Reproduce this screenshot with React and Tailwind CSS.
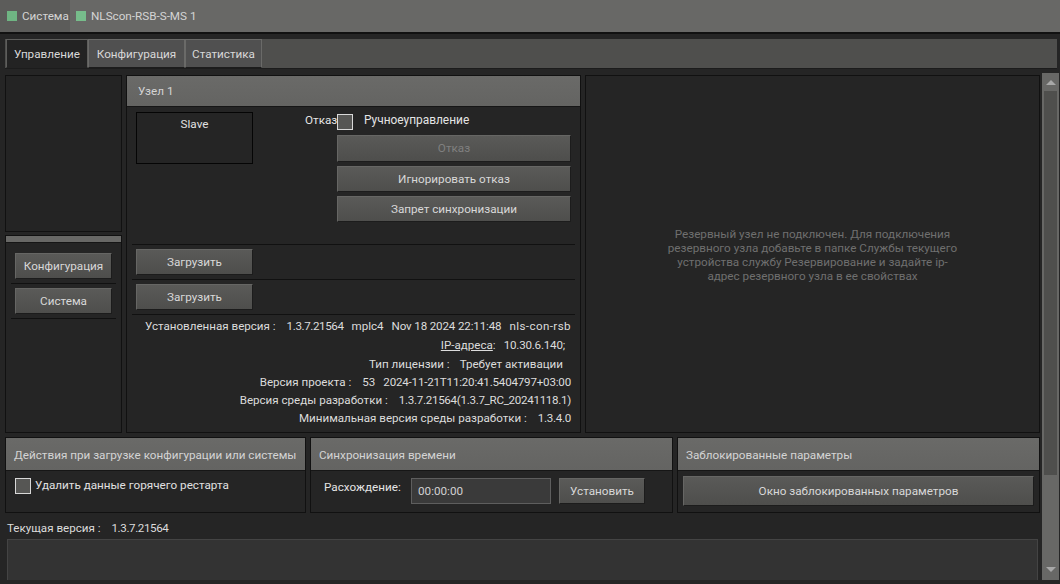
import React from "react";

const btnBase = "flex items-center justify-center border border-[#1c1c1c] border-t-[#666664] border-l-[#666664] bg-gradient-to-b from-[#5a5a58] to-[#4e4e4c]";
const btn = btnBase + " text-[#d8d8d8]";
const head = "flex items-center bg-gradient-to-b from-[#6a6a68] to-[#646462] border-b border-[#161616] text-[#d4d4d4]";

function Check() {
  return <span className="block w-4 h-4 shrink-0 bg-[#565654] border border-[#d8d8d8]" />;
}

function InfoRow({ className, children }) {
  return <div className={"flex justify-end items-center whitespace-pre " + className}>{children}</div>;
}

function App() {
  return (
    <div className="w-[1060px] h-[584px] overflow-hidden flex flex-col bg-[#252525] text-[11.7px] leading-4 text-[#e0e0e0] font-['Roboto','Noto_Sans',sans-serif]">
      <div className="h-[32px] shrink-0 flex bg-[#686866] text-[#d4d4d4]">
        <div className="w-[70px] flex items-center pl-[7px] gap-[5px] bg-[#5c5c5a]">
          <span className="w-[10px] h-[10px] bg-[#6fb583]" />
          <span>Система</span>
        </div>
        <div className="flex items-center pl-[6px] gap-[5px]">
          <span className="w-[10px] h-[10px] bg-[#77bd8b]" />
          <span>NLScon-RSB-S-MS 1</span>
        </div>
      </div>
      <div className="h-[2px] shrink-0 bg-[#111111]" />

      <div className="flex-1 flex min-h-0 pr-[1px]">
        <div className="w-[1041px] shrink-0 flex flex-col pl-[5px] pt-[5px]">
          <div className="h-[30px] flex shrink-0 w-[1052px] pl-[1px] bg-[#4f4f4d] border-b border-[#1c1c1c] text-[#d8d8d8]">
            <div className="w-[82px] flex items-center justify-center bg-[#232323] border border-[#5e5e5c] border-b-[#232323]">Управление</div>
            <div className="w-[97px] flex items-center justify-center bg-[#505050] border border-[#6a6a68] border-b-[#1c1c1c]">Конфигурация</div>
            <div className="w-[77px] flex items-center justify-center bg-[#505050] border border-[#6a6a68] border-b-[#1c1c1c]">Статистика</div>
          </div>

          <div className="flex gap-[4px] mt-[6px] h-[358px] shrink-0">
            <div className="w-[117px] shrink-0 flex flex-col gap-[3px]">
              <div className="h-[157px] border border-[#111111] bg-[#242424]" />
              <div className="flex-1 border border-[#111111] flex flex-col">
                <div className="h-[7px] bg-[#686866] border-b border-[#161616]" />
                <div className="px-[5px] pt-[10px]">
                  <div className="pb-[4px] border-b border-[#111111] px-[4px]">
                    <div className={btn + " h-[26px]"}>Конфигурация</div>
                  </div>
                  <div className="pt-[4px] pb-[4px] border-b border-[#111111] px-[4px]">
                    <div className={btn + " h-[26px]"}>Система</div>
                  </div>
                </div>
              </div>
            </div>

            <div className="w-[455px] shrink-0 border border-[#111111] flex flex-col">
              <div className={head + " h-[31px] pl-[11px] shrink-0"}>Узел 1</div>
              <div className="flex h-[137px] shrink-0 pl-[9px] pt-[5px]">
                <div className="w-[117px] h-[52px] border border-[#050505] text-center pt-[3px]">Slave</div>
                <div className="ml-[52px] flex flex-col">
                  <div className="flex h-[24px] items-start">
                    <span className="w-[32px] leading-[16px] text-[#e4e4e4]">Отказ</span>
                    <span className="mt-[2px]"><Check /></span>
                    <span className="ml-[11px] leading-[16px] text-[11.9px] text-[#e4e4e4]">Ручноеуправление</span>
                  </div>
                  <div className="ml-[32px] w-[234px] flex flex-col gap-[4px] -mt-[1px]">
                    <div className={btnBase + " h-[27px] pb-[2px] text-[#808080]"}>Отказ</div>
                    <div className={btn + " h-[26px]"}>Игнорировать отказ</div>
                    <div className={btn + " h-[26px]"}>Запрет синхронизации</div>
                  </div>
                </div>
              </div>
              <div className="px-[5px] shrink-0">
                <div className="border-t border-[#111111] pt-[4px] pb-[4px] pl-[4px]">
                  <div className={btn + " w-[117px] h-[26px]"}>Загрузить</div>
                </div>
                <div className="border-t border-[#111111] pt-[4px] pb-[4px] pl-[4px]">
                  <div className={btn + " w-[117px] h-[26px]"}>Загрузить</div>
                </div>
                <div className="border-t border-[#111111]" />
              </div>
              <div className="pr-[9px] pt-[1px] text-[#dcdcdc] text-[11.6px]">
                <InfoRow className="h-[19px] gap-[8px]">
                  <span className="mr-[3px]">Установленная версия :</span>
                  <span className="tracking-[-0.4px]">1.3.7.21564</span>
                  <span>mplc4</span>
                  <span className="tracking-[-0.15px]">Nov 18 2024 22:11:48</span>
                  <span className="tracking-[0.4px]">nls-con-rsb</span>
                </InfoRow>
                <InfoRow className="h-[19px] pr-[6px]">
                  <span className="underline">IP-адреса</span>
                  <span className="mr-[8px]">:</span>
                  <span className="tracking-[-0.2px]">10.30.6.140;</span>
                </InfoRow>
                <InfoRow className="h-[19px] pr-[8px] gap-[10px]">
                  <span>Тип лицензии :</span>
                  <span>Требует активации</span>
                </InfoRow>
                <InfoRow className="h-[18px] gap-[8px]">
                  <span className="mr-[3px]">Версия проекта :</span>
                  <span>53</span>
                  <span className="tracking-[-0.2px]">2024-11-21T11:20:41.5404797+03:00</span>
                </InfoRow>
                <InfoRow className="h-[18px] gap-[11px]">
                  <span>Версия среды разработки :</span>
                  <span className="tracking-[-0.3px]">1.3.7.21564(1.3.7_RC_20241118.1)</span>
                </InfoRow>
                <InfoRow className="h-[18px] gap-[11px]">
                  <span>Минимальная версия среды разработки :</span>
                  <span className="tracking-[-0.3px]">1.3.4.0</span>
                </InfoRow>
              </div>
            </div>

            <div className="w-[455px] shrink-0 border border-[#111111] flex items-center justify-center">
              <p className="w-[296px] text-center text-[#6f6f6f] leading-[14px] mt-[1px]">
                Резервный узел не подключен. Для подключения резервного узла добавьте в папке Службы текущего устройства службу Резервирование и задайте ip-адрес резервного узла в ее свойствах
              </p>
            </div>
          </div>

          <div className="flex gap-[4px] mt-[4px] h-[76px] shrink-0">
            <div className="w-[301px] shrink-0 border border-[#111111] flex flex-col">
              <div className={head + " h-[33px] pl-[8px] pt-[1px] shrink-0 whitespace-nowrap"}>Действия при загрузке конфигурации или системы</div>
              <div className="flex items-start pl-[9px] pt-[7px] gap-[4px]">
                <Check />
                <span className="leading-[14px] text-[#e0e0e0]">Удалить данные горячего рестарта</span>
              </div>
            </div>
            <div className="w-[363px] shrink-0 border border-[#111111] flex flex-col">
              <div className={head + " h-[33px] pl-[8px] pt-[1px] shrink-0"}>Синхронизация времени</div>
              <div className="flex items-start pl-[13px] pt-[7px]">
                <span className="w-[87px] text-[#e4e4e4] leading-[14px] pt-[2px]">Расхождение:</span>
                <div className="w-[140px] h-[26px] flex items-center pl-[6px] bg-[#3a3a3a] border border-[#5e5e5e] text-[#d0d0d0]">00:00:00</div>
                <div className={btn + " w-[86px] h-[26px] ml-[8px]"}>Установить</div>
              </div>
            </div>
            <div className="w-[363px] shrink-0 border border-[#111111] flex flex-col">
              <div className={head + " h-[33px] pl-[8px] pt-[1px] shrink-0"}>Заблокированные параметры</div>
              <div className="px-[5px] pt-[5px]">
                <div className={btn + " h-[30px]"}>Окно заблокированных параметров</div>
              </div>
            </div>
          </div>

          <div className="flex items-center gap-[11px] h-[16px] mt-[7px] pl-[2px] whitespace-pre text-[#dcdcdc] text-[11.6px] shrink-0">
            <span>Текущая версия :</span>
            <span className="tracking-[-0.4px]">1.3.7.21564</span>
          </div>
          <div className="h-[41px] mt-[3px] ml-[2px] w-[1031px] bg-[#333333] border border-[#444444] border-b-0 shrink-0" />
        </div>

        <div className="ml-[1px] mt-[39px] h-[507px] w-[17px] shrink-0 bg-[#686866] flex flex-col items-center">
          <span className="mt-[7px] w-0 h-0 border-x-[5px] border-x-transparent border-b-[5px] border-b-[#a8a8a8]" />
          <div className="mt-[6px] w-[13px] h-[384px] bg-[#4f4f4d]" />
          <span className="mt-[92px] w-0 h-0 border-x-[5px] border-x-transparent border-t-[5px] border-t-[#a8a8a8]" />
        </div>
      </div>
    </div>
  );
}

export default App;
